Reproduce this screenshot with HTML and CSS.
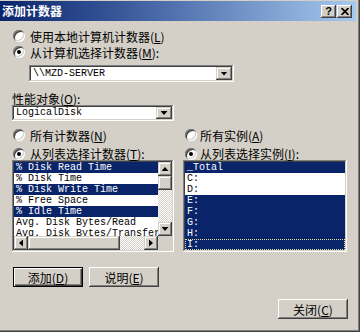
FILE: index.html
```html
<!DOCTYPE html>
<html lang="zh-CN">
<head>
<meta charset="utf-8">
<title>添加计数器</title>
<link rel="stylesheet" href="styles.css">
</head>
<body>
<div class="window">
  <div class="titlebar">
    <span class="title">添加计数器</span>
    <div class="cbtns">
      <span class="cbtn help">?</span>
      <span class="cbtn close"><svg width="8" height="7" viewBox="0 0 8 7"><path d="M0.5 0 L7.5 7 M7.5 0 L0.5 7" stroke="#000" stroke-width="1.7" fill="none"/></svg></span>
    </div>
  </div>
  <div class="content">
    <div class="radio-row r1"><span class="radio"></span>使用本地计算机计数器(<u>L</u>)</div>
    <div class="radio-row r2"><span class="radio checked"></span>从计算机选择计数器(<u>M</u>):</div>
    <div class="combo combo-server"><span class="combo-text">\\MZD-SERVER</span><span class="drop"><span class="tri-down"></span></span></div>
    <div class="obj-label">性能对象(<u>O</u>):</div>
    <div class="combo combo-obj"><span class="combo-text">LogicalDisk</span><span class="drop"><span class="tri-down"></span></span></div>
    <div class="columns">
      <div class="col left">
        <div class="radio-row ra"><span class="radio"></span>所有计数器(<u>N</u>)</div>
        <div class="radio-row rb"><span class="radio checked"></span>从列表选择计数器(<u>T</u>):</div>
        <div class="list list-left">
          <div class="items">
            <div class="item sel">% Disk Read Time</div>
            <div class="item">% Disk Time</div>
            <div class="item sel">% Disk Write Time</div>
            <div class="item">% Free Space</div>
            <div class="item sel">% Idle Time</div>
            <div class="item">Avg. Disk Bytes/Read</div>
            <div class="item">Avg. Disk Bytes/Transfer</div>
          </div>
          <div class="vscroll">
            <span class="sbtn"><span class="tri-up"></span></span>
            <span class="thumb-v"></span>
            <span class="track"></span>
            <span class="sbtn"><span class="tri-down"></span></span>
          </div>
          <div class="hscroll">
            <span class="sbtn"><span class="tri-left"></span></span>
            <span class="thumb-h"></span>
            <span class="track"></span>
            <span class="sbtn"><span class="tri-right"></span></span>
          </div>
          <div class="corner"></div>
        </div>
      </div>
      <div class="col right">
        <div class="radio-row ra"><span class="radio"></span>所有实例(<u>A</u>)</div>
        <div class="radio-row rb"><span class="radio checked"></span>从列表选择实例(<u>I</u>):</div>
        <div class="list list-right">
          <div class="item sel">_Total</div>
          <div class="item">C:</div>
          <div class="item">D:</div>
          <div class="item sel">E:</div>
          <div class="item sel">F:</div>
          <div class="item sel">G:</div>
          <div class="item sel">H:</div>
          <div class="item sel focus">I:</div>
        </div>
      </div>
    </div>
    <div class="btn-row">
      <span class="btn default">添加(<u>D</u>)</span>
      <span class="btn">说明(<u>E</u>)</span>
    </div>
    <div class="close-row">
      <span class="btn">关闭(<u>C</u>)</span>
    </div>
  </div>
</div>
</body>
</html>
```
FILE: styles.css
```css
* { box-sizing: border-box; }
body {
  margin: 0;
  background: #d4d0c8;
  font-family: "Noto Sans CJK SC", "Liberation Sans", sans-serif;
  font-size: 12px;
  color: #000;
}
u { text-decoration: underline; text-underline-offset: 1px; }
.window {
  width: 360px;
  height: 332px;
  background: #d4d0c8;
  padding-top: 1px;
  box-shadow: inset -1px -1px #404040, inset -2px -2px #808080;
  overflow: hidden;
}
.titlebar {
  height: 20px;
  margin-right: 4px;
  background: linear-gradient(to right, #0a246a 0%, #3a5a9c 35%, #a6caf0 100%);
  display: flex;
  align-items: center;
  justify-content: space-between;
  padding: 0 4px 0 2px;
}
.title {
  color: #fff;
  font-weight: bold;
  font-size: 12px;
  line-height: 20px;
  letter-spacing: 0;
}
.cbtns { display: flex; }
.cbtn {
  width: 15px;
  height: 13px;
  background: #d4d0c8;
  box-shadow: inset -1px -1px #404040, inset 1px 1px #fff, inset -2px -2px #808080;
  display: flex;
  align-items: center;
  justify-content: center;
}
.cbtn.help {
  font-family: "Liberation Sans", sans-serif;
  font-weight: bold;
  font-size: 11px;
  line-height: 13px;
}
.cbtn.close { margin-left: 1px; }
.content { padding: 0 12px; }
.radio-row {
  display: flex;
  align-items: center;
  height: 16px;
  white-space: nowrap;
}
.radio {
  width: 12px;
  height: 12px;
  border-radius: 50%;
  background: #fff;
  flex: none;
  margin: 0 5px 0 1px;
  position: relative;
  box-shadow: inset 1px 1px #808080, inset -1px -1px #fff, inset 2px 2px #404040, inset -2px -2px #d4d0c8;
}
.radio.checked::after {
  content: "";
  position: absolute;
  left: 4px;
  top: 4px;
  width: 4px;
  height: 4px;
  border-radius: 50%;
  background: #000;
}
.r1 { margin-top: 7px; }
.combo {
  display: flex;
  background: #fff;
  padding: 2px;
  box-shadow: inset -1px -1px #fff, inset 1px 1px #808080, inset -2px -2px #d4d0c8, inset 2px 2px #404040;
}
.combo-text {
  flex: 1;
  font-family: "Liberation Mono", monospace;
  font-size: 10px;
  line-height: 13px;
  padding-left: 2px;
  white-space: nowrap;
}
.combo-server { margin: 5px 0 0 17px; width: 205px; height: 17px; }
.combo-obj { width: 162px; height: 16px; }
.combo-obj .combo-text { line-height: 12px; }
.drop, .sbtn {
  width: 16px;
  flex: none;
  background: #d4d0c8;
  box-shadow: inset -1px -1px #404040, inset 1px 1px #d4d0c8, inset -2px -2px #808080, inset 2px 2px #fff;
  display: flex;
  align-items: center;
  justify-content: center;
}
.tri-down, .tri-up, .tri-left, .tri-right { display: block; background: #000; }
.tri-down { width: 7px; height: 4px; clip-path: polygon(0 0, 100% 0, 50% 100%); }
.tri-up { width: 7px; height: 4px; clip-path: polygon(50% 0, 100% 100%, 0 100%); }
.tri-left { width: 4px; height: 7px; clip-path: polygon(100% 0, 100% 100%, 0 50%); }
.tri-right { width: 4px; height: 7px; clip-path: polygon(0 0, 100% 50%, 0 100%); }
.obj-label {
  margin-top: 11px;
  height: 12px;
  line-height: 12px;
  white-space: nowrap;
}
.columns {
  display: grid;
  grid-template-columns: 162px 164px;
  column-gap: 9px;
  margin-top: 7px;
}
.ra { height: 14px; }
.rb { height: 13px; margin-top: 5px; }
.right .radio { margin: 0 3px 0 2px; }
.list {
  height: 92px;
  background: #fff;
  padding: 2px;
  box-shadow: inset -1px -1px #fff, inset 1px 1px #808080, inset -2px -2px #d4d0c8, inset 2px 2px #404040;
  overflow: hidden;
}
.list-left {
  display: grid;
  grid-template-columns: 144px 14px;
  grid-template-rows: 74px 14px;
}
.items { overflow: hidden; }
.item {
  height: 11px;
  line-height: 11px;
  padding-left: 2px;
  font-family: "Liberation Mono", monospace;
  font-size: 10px;
  white-space: nowrap;
}
.item.sel { background: #0a246a; color: #fff; }
.item.focus { outline: 1px dotted #e8e4a0; outline-offset: -1px; }
.vscroll { display: flex; flex-direction: column; }
.vscroll .sbtn { width: 14px; height: 14px; }
.thumb-v, .thumb-h {
  background: #d4d0c8;
  box-shadow: inset -1px -1px #404040, inset 1px 1px #d4d0c8, inset -2px -2px #808080, inset 2px 2px #fff;
}
.thumb-v { height: 14px; }
.track {
  flex: 1;
  background-color: #fff;
  background-image: repeating-conic-gradient(#d4d0c8 0 25%, #fff 0 50%);
  background-size: 2px 2px;
}
.hscroll { display: flex; }
.hscroll .sbtn { width: 14px; height: 14px; }
.thumb-h { width: 92px; }
.corner { background: #d4d0c8; }
.btn-row {
  display: flex;
  gap: 6px;
  margin: 15px 0 0 1px;
}
.btn {
  width: 70px;
  height: 20px;
  background: #d4d0c8;
  box-shadow: inset -1px -1px #404040, inset 1px 1px #fff, inset -2px -2px #808080;
  display: flex;
  align-items: center;
  justify-content: center;
  font-size: 12px;
  white-space: nowrap;
}
.btn.default {
  box-shadow: inset 1px 1px #000, inset -1px -1px #000, inset 2px 2px #fff, inset -2px -2px #404040, inset -3px -3px #808080;
}
.close-row {
  display: flex;
  justify-content: flex-end;
  margin-top: 12px;
}
```
